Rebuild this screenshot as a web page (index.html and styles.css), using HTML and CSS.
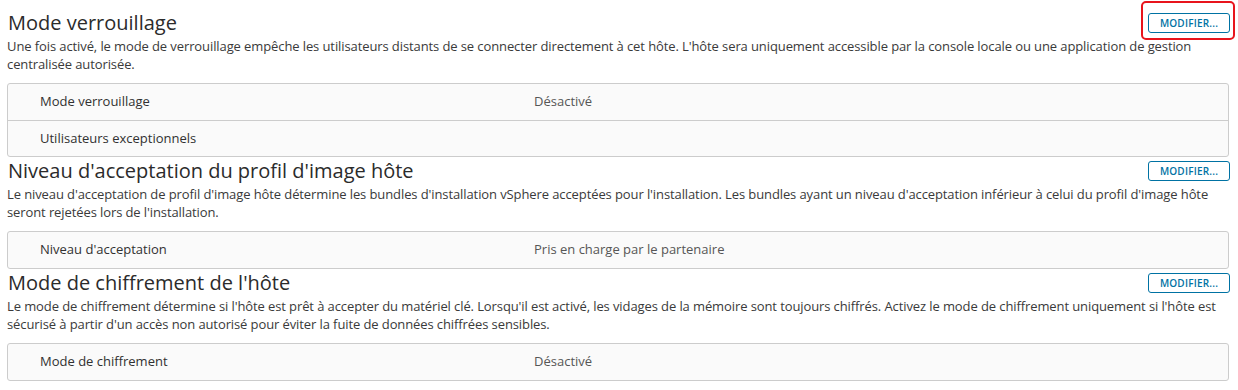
FILE: index.html
```html
<!DOCTYPE html>
<html lang="fr">
<head>
<meta charset="utf-8">
<link rel="stylesheet" href="styles.css">
</head>
<body>
<div class="page">
  <section class="sec">
    <div class="sec-head">
      <h2 class="sec-title">Mode verrouillage</h2>
      <span class="btn-wrap highlighted"><button class="btn">MODIFIER...</button></span>
    </div>
    <p class="sec-desc">Une fois activé, le mode de verrouillage empêche les utilisateurs distants de se connecter directement à cet hôte. L'hôte sera uniquement accessible par la console locale ou une application de gestion centralisée autorisée.</p>
    <div class="grid">
      <div class="row"><span class="label">Mode verrouillage</span><span class="value">Désactivé</span></div>
      <div class="row"><span class="label">Utilisateurs exceptionnels</span><span class="value"></span></div>
    </div>
  </section>
  <section class="sec">
    <div class="sec-head">
      <h2 class="sec-title">Niveau d'acceptation du profil d'image hôte</h2>
      <span class="btn-wrap"><button class="btn">MODIFIER...</button></span>
    </div>
    <p class="sec-desc">Le niveau d'acceptation de profil d'image hôte détermine les bundles d'installation vSphere acceptées pour l'installation. Les bundles ayant un niveau d'acceptation inférieur à celui du profil d'image hôte seront rejetées lors de l'installation.</p>
    <div class="grid">
      <div class="row"><span class="label">Niveau d'acceptation</span><span class="value">Pris en charge par le partenaire</span></div>
    </div>
  </section>
  <section class="sec">
    <div class="sec-head">
      <h2 class="sec-title">Mode de chiffrement de l'hôte</h2>
      <span class="btn-wrap"><button class="btn">MODIFIER...</button></span>
    </div>
    <p class="sec-desc">Le mode de chiffrement détermine si l'hôte est prêt à accepter du matériel clé. Lorsqu'il est activé, les vidages de la mémoire sont toujours chiffrés. Activez le mode de chiffrement uniquement si l'hôte est sécurisé à partir d'un accès non autorisé pour éviter la fuite de données chiffrées sensibles.</p>
    <div class="grid">
      <div class="row"><span class="label">Mode de chiffrement</span><span class="value">Désactivé</span></div>
    </div>
  </section>
</div>
</body>
</html>
```

FILE: styles.css
```css
* { box-sizing: border-box; }
html, body { margin: 0; padding: 0; background: #ffffff; }
body { font-family: "Open Sans", "Liberation Sans", sans-serif; color: #313131; }
.page { padding: 9px 9px 0 7px; }
.sec-head {
  display: flex;
  justify-content: space-between;
  align-items: center;
  height: 28px;
}
.sec-title {
  margin: 0 0 0 1px;
  font-size: 20px;
  font-weight: 400;
  line-height: 28px;
  color: #2b2b2b;
}
.btn-wrap { position: relative; display: inline-flex; margin-right: -1px; }
.btn-wrap.highlighted::after {
  content: "";
  position: absolute;
  left: -7px; right: -5px; top: -12px; bottom: -7px;
  border: 2px solid #e8141c;
  border-radius: 5px;
  pointer-events: none;
}
.btn {
  width: 82px;
  height: 20px;
  padding: 0;
  border: 1px solid #0072a3;
  border-radius: 3px;
  background: #fff;
  color: #0072a3;
  font-family: "Open Sans", "Liberation Sans", sans-serif;
  font-size: 10px;
  font-weight: 600;
  letter-spacing: 0.2px;
  line-height: 18px;
}
.sec-desc {
  margin: 0 0 10px 0;
  font-size: 13px;
  line-height: 18px;
  letter-spacing: -0.1px;
  color: #3a3a3a;
}
.grid {
  border: 1px solid #cccccc;
  border-radius: 3px;
  background: #fafafa;
}
.row {
  display: grid;
  grid-template-columns: 494px 1fr;
  height: 36px;
  align-items: center;
  padding-left: 32px;
  padding-bottom: 2px;
  font-size: 13px;
}
.row + .row { border-top: 1px solid #cccccc; }
.label { color: #313131; }
.value { color: #565656; }
```
